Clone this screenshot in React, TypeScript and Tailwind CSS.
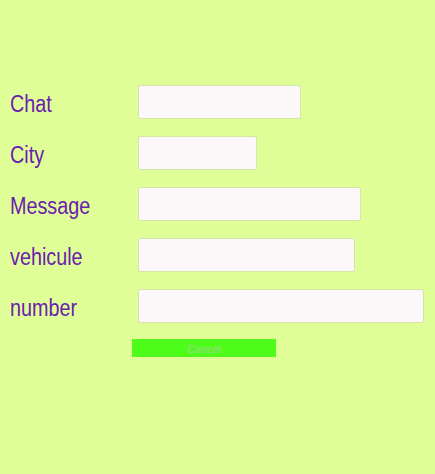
export default function App() {
  const rows = [
    { label: "Chat", width: "w-[163px]" },
    { label: "City", width: "w-[119px]" },
    { label: "Message", width: "w-[223px]" },
    { label: "vehicule", width: "w-[217px]" },
    { label: "number", width: "w-[286px]" },
  ];

  return (
    <div className="min-h-[474px] w-full bg-[#e0fe98] pt-[85px] font-['Liberation_Sans',Arial,sans-serif]">
      <form className="flex flex-col gap-[17px]">
        {rows.map((row) => (
          <div key={row.label} className="flex items-center">
            <div className="w-[138px] pl-[10px] pt-[8px]">
              <label className="inline-block origin-left scale-x-[0.86] text-[23px] leading-none text-[#6a20ae]">
                {row.label}
              </label>
            </div>
            <input
              type="text"
              className={`${row.width} h-[34px] rounded-[2px] border border-[#d3e6a6] bg-[#fcf8f9] outline-none`}
            />
          </div>
        ))}
      </form>
      <div className="mt-[16px] pl-[132px]">
        <button
          type="button"
          className="flex h-[18px] w-[144px] items-center justify-center pt-[2px] bg-[#4efc1a] text-[11px] text-[#a0d58e]"
        >
          Cancel
        </button>
      </div>
    </div>
  );
}
